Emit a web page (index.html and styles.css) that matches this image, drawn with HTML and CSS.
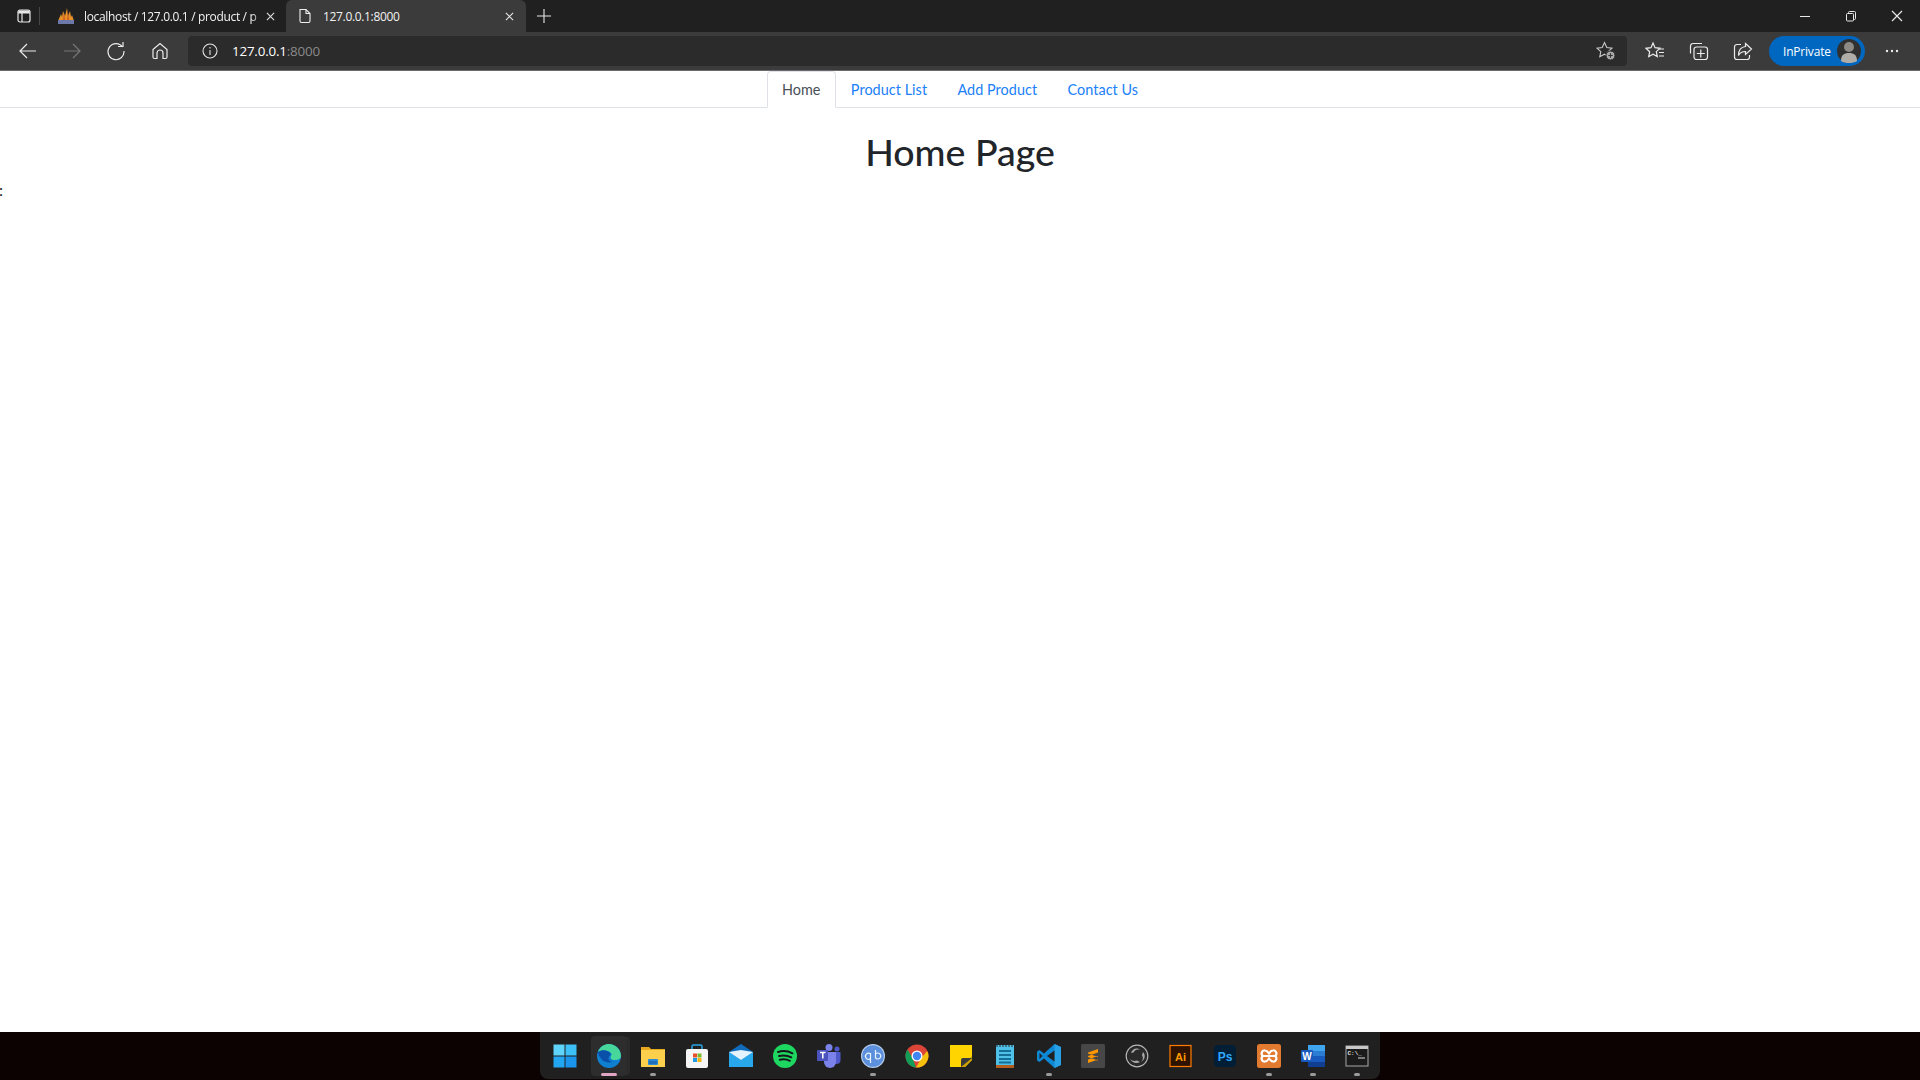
FILE: index.html
```html
<!DOCTYPE html>
<html lang="en">
<head>
<meta charset="utf-8">
<title>127.0.0.1:8000</title>
<link rel="stylesheet" href="styles.css">
</head>
<body>
<header class="browser">
  <div class="tabstrip">
    <div class="tab-actions">
      <svg class="ic16" viewBox="0 0 16 16" fill="none" stroke="#e8e8e8" stroke-width="1.2"><rect x="2" y="2" width="12" height="12" rx="2"/><path d="M2 5h12M6 5v9" /><path d="M2.5 2.5h11v2.5h-11z" fill="#e8e8e8" stroke="none"/></svg>
      <span class="tab-sep"></span>
    </div>
    <div class="tab tab-inactive">
      <svg class="ic16 fav" viewBox="0 0 18 18"><path d="M1 14 4 7l1 3 1-6 2 5 2-8 1 8 2-5 1 6 1-2 2 6z" fill="#e8912a"/><path d="M7 5l1 9H6zM11 5l1 9h-2z" fill="#c9561c"/><rect x="1" y="13" width="16" height="4" fill="#6c78a8"/></svg>
      <span class="tab-title title-fade">localhost / 127.0.0.1 / product / p</span>
      <svg class="ic-close" viewBox="0 0 10 10" stroke="#e0e0e0" stroke-width="1.2"><path d="M1 1l8 8M9 1l-8 8"/></svg>
    </div>
    <div class="tab tab-active">
      <svg class="ic16 doc" viewBox="0 0 16 16" fill="none" stroke="#f0f0f0" stroke-width="1.1"><path d="M3 1.5h6l4 4V13a1.5 1.5 0 0 1-1.500 1.500h-7A1.500 1.500 0 0 1 3 13z"/><path d="M9 1.500V5.500h4"/></svg>
      <span class="tab-title">127.0.0.1:8000</span>
      <svg class="ic-close" viewBox="0 0 10 10" stroke="#e8e8e8" stroke-width="1.2"><path d="M1 1l8 8M9 1l-8 8"/></svg>
    </div>
    <svg class="ic-plus" viewBox="0 0 14 14" stroke="#e8e8e8" stroke-width="1.100"><path d="M7 0v14M0 7h14"/></svg>
    <div class="window-controls">
      <svg class="ic-win" viewBox="0 0 12 12" stroke="#e8e8e8" fill="none"><path d="M1 6.500h10"/></svg>
      <svg class="ic-win" viewBox="0 0 12 12" stroke="#e8e8e8" fill="none"><rect x="1.500" y="3.500" width="7" height="7.500" rx="1"/><path d="M3.500 3.500V2.500a1 1 0 0 1 1-1h5a1 1 0 0 1 1 1v6a1 1 0 0 1-1 1h-1"/></svg>
      <svg class="ic-win" viewBox="0 0 12 12" stroke="#eeeeee" stroke-width="1.100" fill="none"><path d="M1 1l10 10M11 1L1 11"/></svg>
    </div>
  </div>
  <div class="toolbar">
    <svg class="tb-ic" viewBox="0 0 20 20" fill="none" stroke="#ececec" stroke-width="1.200"><path d="M18 10H2M9 3l-7 7 7 7"/></svg>
    <svg class="tb-ic" viewBox="0 0 20 20" fill="none" stroke="#777" stroke-width="1.200"><path d="M2 10h16M11 3l7 7-7 7"/></svg>
    <svg class="tb-ic" viewBox="0 0 20 20" fill="none" stroke="#ececec" stroke-width="1.200"><path d="M16.500 6A8 8 0 1 0 18 10"/><path d="M12 5.500h5V1"/></svg>
    <svg class="tb-ic" viewBox="0 0 20 20" fill="none" stroke="#ececec" stroke-width="1.200"><path d="M3 8.500 10 2.500l7 6V16a1.500 1.500 0 0 1-1.500 1.500H13V12a3 3 0 0 0-6 0v5.500H4.500A1.500 1.500 0 0 1 3 16z"/></svg>
    <div class="address">
      <svg class="addr-info" viewBox="0 0 16 16" fill="none" stroke="#e4e4e4" stroke-width="1.100"><circle cx="8" cy="8" r="7"/><path d="M8 7v5M8 4v1.400"/></svg>
      <span class="url"><span class="host">127.0.0.1</span>:8000</span>
      <svg class="addr-fav" viewBox="0 0 20 20" fill="none" stroke="#c8c8c8" stroke-width="1.100"><path d="M8.500 1.500l2.300 5 5.200.6-3.800 3.500 1 5.200-4.700-2.600-4.700 2.600 1-5.200L1 7.100l5.200-.6z"/><circle cx="14.500" cy="14.500" r="4.500" fill="#a9a9a9" stroke="#2b2b2b" stroke-width="1"/><path d="M14.500 12.300v4.400M12.300 14.500h4.400" stroke="#333"/></svg>
    </div>
    <svg class="tb-ic tb-right" viewBox="0 0 20 20" fill="none" stroke="#ececec" stroke-width="1.200"><path d="M8 2l2 4.700 5 .6-3.700 3.300 1 5L8 13.300 3.700 15.700l1-5L1 7.300l5-.6z"/><path d="M14 8h5M14 11.500h5M14 15h5"/></svg>
    <svg class="tb-ic tb-right" viewBox="0 0 20 20" fill="none" stroke="#ececec" stroke-width="1.200"><path d="M13 2.500H4A2.500 2.500 0 0 0 1.500 5v7.500"/><rect x="5" y="6" width="13.500" height="12.500" rx="2.500"/><path d="M11.800 8.500v8M7.800 12.500h8"/></svg>
    <svg class="tb-ic tb-right" viewBox="0 0 20 20" fill="none" stroke="#ececec" stroke-width="1.200"><path d="M8 3.500H4A2.500 2.500 0 0 0 1.500 6v10A2.500 2.500 0 0 0 4 18.500h10a2.500 2.500 0 0 0 2.500-2.500v-2"/><path d="M12.500 2.500l6 5.500-6 5.500V10.500c-3.500 0-5.500 1-7 4 0-5 2.500-8.500 7-9z"/></svg>
    <div class="inprivate">
      <span>InPrivate</span>
      <svg class="avatar" viewBox="0 0 24 24"><circle cx="12" cy="12" r="12" fill="#303030"/><circle cx="12" cy="8" r="5" fill="#8d8a86"/><path d="M4 22c0-6 3-8 8-8s8 2 8 8c-2 1.500-5 2-8 2s-6-.5-8-2z" fill="#b0ada8"/></svg>
    </div>
    <svg class="tb-more" viewBox="0 0 14 4" fill="#ececec"><circle cx="2" cy="2" r="1.200"/><circle cx="7" cy="2" r="1.200"/><circle cx="12" cy="2" r="1.200"/></svg>
  </div>
</header>

<main class="page">
  <nav class="nav-tabs">
    <a class="nav-link current">Home</a>
    <a class="nav-link">Product List</a>
    <a class="nav-link">Add Product</a>
    <a class="nav-link">Contact Us</a>
  </nav>
  <h1 class="title">Home Page</h1>
  <p class="stray">:</p>
</main>

<footer class="taskbar">
  <div class="panel">
    <div class="ti"><svg viewBox="0 0 24 24"><rect x="0.500" y="0.500" width="11" height="11" fill="#5fd4fb"/><rect x="12.500" y="0.500" width="11" height="11" fill="#3cc0f7"/><rect x="0.500" y="12.500" width="11" height="11" fill="#23a6f2"/><rect x="12.500" y="12.500" width="11" height="11" fill="#1a94ec"/></svg></div>
    <div class="ti ti-active"><svg viewBox="0 0 24 24"><circle cx="12" cy="12" r="12" fill="#0f7fd0"/><path d="M1 8C3 2 8 0 12 0c6 0 12 5 12 12 0 3-3 4-6 4-4 0-5-2-4-4 .5-1 1-1.500 0-3-3-3-9-3-13-1z" fill="#47d79b"/><path d="M1 8c4-3 10-2 12 1 .5 1 .5 2-.5 3-2 2-1 5 3 6-4 1-9 0-11-3C3 13 1 11 1 8z" fill="#0a4fa8"/></svg><span class="dot dot-edge"></span></div>
    <div class="ti"><svg viewBox="0 0 24 24"><path d="M0 3h8l2 2h14v18H0z" fill="#e8a91f"/><rect y="6" width="24" height="17" fill="#fcd04d"/><rect x="7" y="15" width="10" height="6" rx="1" fill="#2b8ad6"/><rect x="8" y="17" width="8" height="3" fill="#1c6fb8"/></svg><span class="dot"></span></div>
    <div class="ti"><svg viewBox="0 0 24 24"><path d="M7 7V2.500a1.500 1.500 0 0 1 1.500-1.500h7A1.500 1.500 0 0 1 17 2.500V7" fill="none" stroke="#26a6e8" stroke-width="1.500"/><rect x="1" y="5" width="22" height="19" rx="2" fill="#f5f5f5"/><rect x="8" y="9.500" width="4" height="4" fill="#e8502a"/><rect x="12.500" y="9.500" width="4" height="4" fill="#7cb92a"/><rect x="8" y="14" width="4" height="4" fill="#1e9be4"/><rect x="12.500" y="14" width="4" height="4" fill="#f2b50f"/></svg></div>
    <div class="ti"><svg viewBox="0 0 24 24"><path d="M0 8 12 0l12 8v15H0z" fill="#0f6cbd"/><path d="M0 8l12 8 12-8v15H0z" fill="#28a8ea"/><path d="M0 8l12 8 12-8-12-2z" fill="#e4f3fc"/></svg></div>
    <div class="ti"><svg viewBox="0 0 24 24"><circle cx="12" cy="12" r="12" fill="#1ed760"/><path d="M5 8c5-1.500 10-1 14.500 1.300M6 12c4.500-1 8.500-.6 12.300 1.300M6.800 15.800c3.500-.8 7-.5 10 1" fill="none" stroke="#16161a" stroke-width="2" stroke-linecap="round"/></svg></div>
    <div class="ti"><svg viewBox="0 0 24 24"><circle cx="12" cy="3.500" r="3.500" fill="#7b83eb"/><circle cx="20" cy="5" r="2.500" fill="#5059c9"/><path d="M14 8h9.500v8a4 4 0 0 1-8 0z" fill="#5059c9"/><path d="M7 8h12v10a6 6 0 0 1-12 0z" fill="#7b83eb"/><rect y="6" width="11" height="11" rx="1" fill="#4b53bc"/><path d="M3 8.500h5.500M5.800 8.500v6" stroke="#fff" stroke-width="1.500" fill="none"/></svg></div>
    <div class="ti"><svg viewBox="0 0 24 24"><circle cx="12" cy="12" r="12" fill="#b9cdea"/><circle cx="12" cy="12" r="10.800" fill="#5c90dc"/><path d="M9.500 10a3 3 0 1 0 0 4.500V9m0 5.500V19M14.500 6v8a3 3 0 1 0 0-4" fill="none" stroke="#e9f2ff" stroke-width="1.200"/></svg><span class="dot"></span></div>
    <div class="ti"><svg viewBox="0 0 24 24"><circle cx="12" cy="12" r="11.500" fill="#db4437"/><path d="M22.200 7A11.500 11.500 0 0 1 11 23.500L17 13z" fill="#f4c20d"/><path d="M11 23.500A11.500 11.500 0 0 1 2.500 5.500L7.500 14z" fill="#0f9d58"/><circle cx="12" cy="12" r="5.500" fill="#fff"/><circle cx="12" cy="12" r="4.200" fill="#4285f4"/></svg></div>
    <div class="ti"><svg viewBox="0 0 24 24"><path d="M1 1h22v15l-7 7H1z" fill="#ffd400"/><path d="M12 23l11-11v4l-7 7z" fill="#caa100"/><path d="M12 23v-7a2 2 0 0 1 2-2h9z" fill="#3a3a3a"/></svg></div>
    <div class="ti"><svg viewBox="0 0 24 24"><rect x="3" y="1" width="18" height="23" fill="#4fc1e9"/><rect x="3" y="21" width="18" height="3" fill="#b45f1e"/><path d="M6 7h12M6 11h12M6 15h12M6 18.500h12" stroke="#146f96" stroke-width="1.800"/><path d="M4 1v2M7 1v2M10 1v2M13 1v2M16 1v2M19 1v2" stroke="#2b2b2b"/></svg></div>
    <div class="ti"><svg viewBox="0 0 24 24"><path d="M17.500 0 24 3v18l-6.500 3L7 14.500l-4.500 3.500L0 16.500v-9L2.500 6 7 9.500z" fill="#0e88d3"/><path d="M17.500 0 24 3v18l-6.500 3z" fill="#28a0e6"/><path d="M17.500 6.500v11L10 12z" fill="#202020"/><path d="M2.500 9v6l3-3z" fill="#202020"/></svg><span class="dot"></span></div>
    <div class="ti"><svg viewBox="0 0 24 24"><rect width="24" height="24" rx="1.500" fill="#474747"/><path d="M17 5 7 8.500V12l10-3.500zM7 9.500 17 13v3.500L7 13zM17 12 7 15.500V19l10-3.500z" fill="#ff9800"/></svg></div>
    <div class="ti"><svg viewBox="0 0 24 24" fill="none"><circle cx="12" cy="12" r="10.800" stroke="#b5b5b5" stroke-width="1.200"/><circle cx="12" cy="12" r="9.500" fill="#2a2a2a"/><path d="M6 9c1-4 6-6 9-3-3-1-5 0-6.500 2.500zM18 8c3 3 2 8-2 10 2-2 2.500-4 1-7zM15 18c-3 2-8 1-10-3 2 2 4 2.500 7 1.500z" fill="#a8a8a8"/></svg></div>
    <div class="ti"><svg viewBox="0 0 24 24"><rect x="1" y="1.500" width="21" height="21" fill="#2e1300" stroke="#ff7c00" stroke-width="1.200"/><text class="ai-t" x="11.500" y="16.500" text-anchor="middle">Ai</text></svg></div>
    <div class="ti"><svg viewBox="0 0 24 24"><rect x="1" y="1" width="22" height="22" rx="4" fill="#001e36"/><text class="ps-t" x="12" y="16.500" text-anchor="middle">Ps</text></svg></div>
    <div class="ti"><svg viewBox="0 0 24 24"><rect width="24" height="24" rx="2.500" fill="#e27a30"/><path d="M8 6.500a3 3 0 0 0-2 5.500 3 3 0 0 0 2 5.500c2 0 3-1.500 4-3 1 1.500 2 3 4 3a3 3 0 0 0 2-5.500 3 3 0 0 0-2-5.500c-2 0-3 1.500-4 3-1-1.500-2-3-4-3zM6 12h12" fill="none" stroke="#fff" stroke-width="2.200"/></svg><span class="dot"></span></div>
    <div class="ti"><svg viewBox="0 0 24 24"><rect x="7" y="1" width="17" height="22" rx="1" fill="#2b7cd3"/><rect x="7" y="1" width="17" height="6" fill="#41a5ee"/><rect x="7" y="12" width="17" height="6" fill="#185abd"/><rect x="7" y="18" width="17" height="5" fill="#103f91"/><rect y="6" width="12" height="12" rx="1" fill="#185abd"/><text class="word-t" x="6" y="15.500" text-anchor="middle">W</text></svg><span class="dot"></span></div>
    <div class="ti"><svg viewBox="0 0 24 24"><rect x="1" y="2" width="22" height="20" fill="#1b1b1b" stroke="#a8a8a8"/><rect x="1" y="2" width="22" height="3" fill="#c8c8c8"/><text class="cmd-t" x="2.500" y="11">C:\_</text><path d="M13 14h7" stroke="#ddd"/></svg><span class="dot"></span></div>
  </div>
</footer>
</body>
</html>
```
FILE: styles.css
```css
* { box-sizing: border-box; }
html, body { height: 100%; }
body {
  margin: 0;
  display: flex;
  flex-direction: column;
  height: 100vh;
  overflow: hidden;
  background: #fff;
  font-family: "Lato", "Noto Sans", sans-serif;
}
svg { display: block; flex: none; }

/* Browser chrome */
.browser { flex: none; font-family: "Open Sans", "Noto Sans", sans-serif; color: #f2f2f2; }
.tabstrip { height: 32px; background: #202020; display: flex; align-items: center; }
.tab-actions { display: flex; align-items: center; width: 51px; padding-left: 16px; }
.ic16 { width: 16px; height: 16px; }
.tab-sep { width: 1px; height: 18px; background: #484848; margin-left: 7px; }
.tab { height: 32px; display: flex; align-items: center; font-size: 12px; white-space: nowrap; }
.tab-inactive { width: 235px; padding-left: 6px; padding-right: 10px; }
.tab-active { width: 240px; padding-left: 11px; padding-right: 12px; background: #3b3b3b; border-radius: 6px 6px 0 0; }
.fav { width: 18px; height: 18px; }
.tab-title { flex: 1; min-width: 0; letter-spacing: -0.34px; margin-left: 10px; }
.title-fade {
  margin-left: 9px;
  -webkit-mask-image: linear-gradient(to right, #000 92%, transparent 100%);
  mask-image: linear-gradient(to right, #000 92%, transparent 100%);
}
.ic-close { width: 9px; height: 9px; }
.tab-inactive .ic-close { margin-right: 1px; }
.ic-plus { width: 14px; height: 14px; margin-left: 11px; }
.window-controls { margin-left: auto; display: flex; gap: 34px; padding-right: 17px; align-items: center; }
.ic-win { width: 12px; height: 12px; }

.toolbar { height: 39px; background: #3b3b3b; border-bottom: 1px solid #6a6a6a; display: flex; align-items: center; padding: 0 21px 0 18px; }
.tb-ic { width: 20px; height: 20px; margin-right: 24px; }
.address { flex: 1; height: 30px; margin-left: -6px; background: #2b2b2b; border-radius: 4px; display: flex; align-items: center; padding: 0 11px 0 14px; margin-right: 18px; }
.addr-info { width: 16px; height: 16px; }
.url { font-size: 13.400px; color: #8a8a8a; margin-left: 14px; letter-spacing: -0.2px; }
.host { color: #fff; }
.addr-fav { width: 20px; height: 20px; margin-left: auto; }
.tb-right { margin-right: 24px; }
.inprivate { width: 96px; height: 30px; margin-left: -8px; background: #0067c0; border-radius: 15px; display: flex; align-items: center; justify-content: space-between; padding: 0 4px 0 14px; font-size: 12px; color: #fff; letter-spacing: -0.2px; }
.avatar { width: 24px; height: 24px; }
.tb-more { width: 14px; height: 4px; margin-left: 20px; }

/* Page */
.page { flex: 1; min-height: 0; color: #212529; }
.nav-tabs { display: flex; justify-content: center; border-bottom: 1px solid #dee2e6; height: 37px; }
.nav-link { height: 37px; padding: 7px 14.200px; font-size: 14.400px; line-height: 22px; letter-spacing: 0.05px; color: #2080f8; border: 1px solid transparent; }
.current { color: #495057; background: #fff; border-color: #dee2e6 #dee2e6 #fff; border-radius: 4px 4px 0 0; }
.title { margin: 0; padding-top: 20px; text-align: center; font-size: 37.500px; line-height: 48px; font-weight: 500; }
.stray { margin: 0; padding-top: 2px; margin-left: -1px; font-size: 16px; line-height: 24px; color: #212529; }

/* Taskbar */
.taskbar { flex: none; height: 48px; background: #0d0202; display: flex; justify-content: center; }
.panel { width: 840px; height: 47px; padding: 0 0 0 3px; background: #202020; border-radius: 0 0 8px 8px; display: flex; }
.ti { width: 44px; position: relative; display: flex; align-items: center; justify-content: center; }
.ti svg { width: 24px; height: 24px; }
.ti-active { width: 36px; margin: 4px 4px 3px 4px; background: #2d2d2d; border-radius: 4px; box-shadow: 4px 0 0 -1px #2a2a2a; }
.dot { position: absolute; left: 50%; bottom: 3px; width: 6px; height: 3px; margin-left: -3px; border-radius: 2px; background: #9a9a9a; }
.dot-edge { width: 16px; margin-left: -8px; background: #e0a6c4; bottom: 0; }
.ai-t { font: 700 11px "Liberation Sans", sans-serif; fill: #ff9a00; }
.ps-t { font: 700 12px "Liberation Sans", sans-serif; fill: #31a8ff; }
.word-t { font: 700 10px "Liberation Sans", sans-serif; fill: #fff; }
.cmd-t { font: 700 6px "Liberation Mono", monospace; fill: #e0e0e0; }
```
